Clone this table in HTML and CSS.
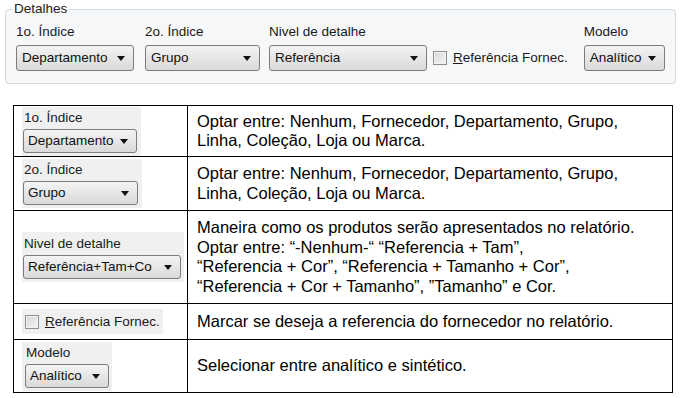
FILE: index.html
```html
<!DOCTYPE html>
<html lang="pt-BR">
<head>
    <meta charset="UTF-8">
    <title>Detalhes</title>
    <link rel="stylesheet" href="styles.css">
</head>
<body>
    <fieldset class="details">
        <legend>Detalhes</legend>
        <div class="details-row">
            <div class="field field-index1">
                <div class="field-label">1o. Índice</div>
                <div class="combo w-118"><span>Departamento</span><i class="arrow"></i></div>
            </div>
            <div class="field field-index2">
                <div class="field-label">2o. Índice</div>
                <div class="combo w-115"><span>Grupo</span><i class="arrow"></i></div>
            </div>
            <div class="field field-level">
                <div class="field-label">Nivel de detalhe</div>
                <div class="combo w-158"><span>Referência</span><i class="arrow"></i></div>
            </div>
            <label class="check field-check">
                <span class="box"></span>
                <span><u>R</u>eferência Fornec.</span>
            </label>
            <div class="field field-model">
                <div class="field-label">Modelo</div>
                <div class="combo w-81"><span>Analítico</span><i class="arrow"></i></div>
            </div>
        </div>
    </fieldset>

    <table class="help">
        <tr class="r1">
            <td class="ui">
                <div class="snap snap-1">
                    <div class="field-label">1o. Índice</div>
                    <div class="combo small w-114"><span>Departamento</span><i class="arrow"></i></div>
                </div>
            </td>
            <td class="desc">Optar entre: Nenhum, Fornecedor, Departamento, Grupo,<br>Linha, Coleção, Loja ou Marca.</td>
        </tr>
        <tr class="r2">
            <td class="ui">
                <div class="snap snap-2">
                    <div class="field-label">2o. Índice</div>
                    <div class="combo small w-115"><span>Grupo</span><i class="arrow"></i></div>
                </div>
            </td>
            <td class="desc">Optar entre: Nenhum, Fornecedor, Departamento, Grupo,<br>Linha, Coleção, Loja ou Marca.</td>
        </tr>
        <tr class="r3">
            <td class="ui">
                <div class="snap snap-3">
                    <div class="field-label">Nivel de detalhe</div>
                    <div class="combo small w-158"><span>Referência+Tam+Co</span><i class="arrow"></i></div>
                </div>
            </td>
            <td class="desc">Maneira como os produtos serão apresentados no relatório.<br>Optar entre: “-Nenhum-“ “Referencia + Tam”,<br>“Referencia + Cor”, “Referencia + Tamanho + Cor”,<br>“Referencia + Cor + Tamanho”, ”Tamanho” e Cor.</td>
        </tr>
        <tr class="r4">
            <td class="ui">
                <div class="snap snap-4">
                    <label class="check">
                        <span class="box"></span>
                        <span><u>R</u>eferência Fornec.</span>
                    </label>
                </div>
            </td>
            <td class="desc">Marcar se deseja a referencia do fornecedor no relatório.</td>
        </tr>
        <tr class="r5">
            <td class="ui">
                <div class="snap snap-5">
                    <div class="field-label">Modelo</div>
                    <div class="combo small w-84"><span>Analítico</span><i class="arrow"></i></div>
                </div>
            </td>
            <td class="desc">Selecionar entre analítico e sintético.</td>
        </tr>
    </table>
</body>
</html>
```

FILE: styles.css
```css
* {
    box-sizing: border-box;
}

body {
    margin: 0;
    background: #ffffff;
    font-family: "Liberation Sans", Arial, sans-serif;
    color: #000;
}

/* group box at the top */
.details {
    margin: 1px 7px 0 5px;
    padding: 0 10px 12px 10px;
    height: 83px;
    border: 1px solid #d4dbe1;
    border-radius: 4px;
    background: #f6f7f8;
}

.details legend {
    margin-left: -4px;
    padding: 0 2px;
    font-size: 13.5px;
    line-height: 16px;
    color: #222;
}

.details-row {
    display: flex;
    align-items: flex-end;
    margin-top: 7px;
}

.field-label {
    font-size: 13.5px;
    line-height: 16px;
    color: #1a1a1a;
    margin-bottom: 5px;
}

.field-index1 { margin-left: 0; }
.field-index2 { margin-left: 11px; }
.field-level { margin-left: 9px; }
.field-check { margin-left: 6px; margin-bottom: 6px; }
.field-model { margin-left: 16px; }

/* combo box */
.combo {
    position: relative;
    height: 26px;
    border: 1px solid #7c7c7c;
    border-radius: 3px;
    background: linear-gradient(#f4f4f4, #e6e6e6 50%, #dadada);
    font-size: 13.5px;
    line-height: 24px;
    padding-left: 5px;
    color: #111;
    white-space: nowrap;
    overflow: hidden;
}

.combo.small {
    height: 24px;
    line-height: 22px;
    padding-left: 4px;
}

.combo .arrow {
    position: absolute;
    right: 8px;
    top: 50%;
    margin-top: -2px;
    width: 0;
    height: 0;
    border-left: 4px solid transparent;
    border-right: 4px solid transparent;
    border-top: 5px solid #111;
}

.w-81 { width: 81px; }
.w-84 { width: 84px; }
.w-114 { width: 114px; }
.w-115 { width: 115px; }
.w-118 { width: 118px; }
.w-158 { width: 158px; }

/* check box */
.check {
    display: flex;
    align-items: center;
    gap: 6px;
    font-size: 13.5px;
    color: #1a1a1a;
    white-space: nowrap;
}

.check .box {
    width: 14px;
    height: 14px;
    border: 1px solid #8e8f8f;
    background: linear-gradient(135deg, #d8d8d8, #f4f4f4);
    box-shadow: inset 0 0 0 1px #f2f2f2;
}

.check u {
    text-decoration-thickness: 1px;
}

/* description table */
.help {
    border-collapse: collapse;
    margin: 21px 0 0 13px;
    width: 660px;
}

.help td {
    border: 1px solid #000;
    padding: 0;
    vertical-align: middle;
}

.help .ui {
    width: 174px;
    padding-left: 8px;
}

.help .desc {
    padding-left: 9px;
    font-family: "Liberation Sans", Arial, sans-serif;
    font-size: 16.5px;
    line-height: 19.5px;
}

.r1 td { height: 51px; }
.r2 td { height: 54px; }
.r3 td { height: 93px; }
.r4 td { height: 36px; }
.r5 td { height: 53px; }

/* captured UI fragments in the first column */
.snap {
    background: #f0f0f0;
    padding: 2px 4px 3px 1px;
}

.snap .field-label {
    margin: 0 0 3px 1px;
    line-height: 17px;
}

.snap-1 { width: 119px; }
.snap-2 { width: 120px; }
.snap-3 { width: 162px; padding-top: 3px; }
.snap-4 { width: 141px; padding: 5px 3px 5px 3px; }
.snap-5 { width: 90px; padding-left: 3px; }
```
